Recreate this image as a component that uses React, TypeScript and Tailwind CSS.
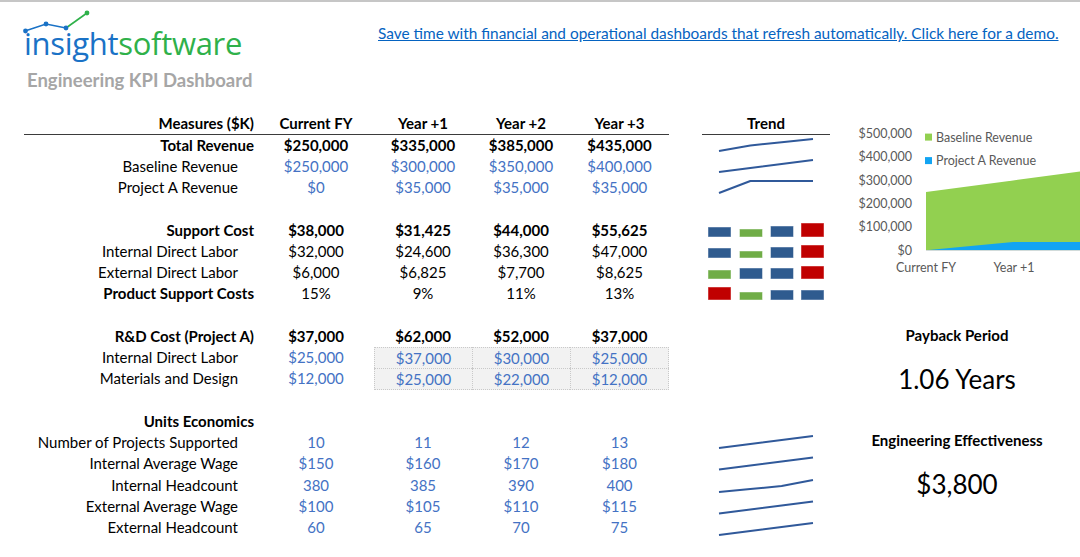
import React from "react";

type Kind = "head" | "bold" | "sub" | "empty";
type Row = {
  kind: Kind;
  label?: string;
  vals?: string[];
  blue?: boolean;
  vb?: boolean;
  shade?: boolean;
  spark?: number[];
  bars?: [string, number][];
};

const B = "#2f5b8f";
const G = "#70ad47";
const R = "#c00000";

const rows: Row[] = [
  { kind: "head", label: "Measures ($K)", vals: ["Current FY", "Year +1", "Year +2", "Year +3"], vb: true },
  { kind: "bold", label: "Total Revenue", vals: ["$250,000", "$335,000", "$385,000", "$435,000"], vb: true, spark: [250, 335, 385, 435] },
  { kind: "sub", label: "Baseline Revenue", vals: ["$250,000", "$300,000", "$350,000", "$400,000"], blue: true, spark: [250, 300, 350, 400] },
  { kind: "sub", label: "Project A Revenue", vals: ["$0", "$35,000", "$35,000", "$35,000"], blue: true, spark: [0, 35, 35, 35] },
  { kind: "empty" },
  { kind: "bold", label: "Support Cost", vals: ["$38,000", "$31,425", "$44,000", "$55,625"], vb: true, bars: [[B, 9], [G, 7], [B, 10], [R, 13]] },
  { kind: "sub", label: "Internal Direct Labor", vals: ["$32,000", "$24,600", "$36,300", "$47,000"], bars: [[B, 9], [G, 6], [B, 10], [R, 12]] },
  { kind: "sub", label: "External Direct Labor", vals: ["$6,000", "$6,825", "$7,700", "$8,625"], bars: [[G, 8], [B, 10], [B, 10], [R, 12]] },
  { kind: "bold", label: "Product Support Costs", vals: ["15%", "9%", "11%", "13%"], bars: [[R, 12], [G, 7], [B, 9], [B, 9]] },
  { kind: "empty" },
  { kind: "bold", label: "R&D Cost (Project A)", vals: ["$37,000", "$62,000", "$52,000", "$37,000"], vb: true },
  { kind: "sub", label: "Internal Direct Labor", vals: ["$25,000", "$37,000", "$30,000", "$25,000"], blue: true, shade: true },
  { kind: "sub", label: "Materials and Design", vals: ["$12,000", "$25,000", "$22,000", "$12,000"], blue: true, shade: true },
  { kind: "empty" },
  { kind: "bold", label: "Units Economics" },
  { kind: "sub", label: "Number of Projects Supported", vals: ["10", "11", "12", "13"], blue: true, spark: [10, 11, 12, 13] },
  { kind: "sub", label: "Internal Average Wage", vals: ["$150", "$160", "$170", "$180"], blue: true, spark: [150, 160, 170, 180] },
  { kind: "sub", label: "Internal Headcount", vals: ["380", "385", "390", "400"], blue: true, spark: [380, 385, 390, 400] },
  { kind: "sub", label: "External Average Wage", vals: ["$100", "$105", "$110", "$115"], blue: true, spark: [100, 105, 110, 115] },
  { kind: "sub", label: "External Headcount", vals: ["60", "65", "70", "75"], blue: true, spark: [60, 65, 70, 75] },
];

function Spark({ data, dy }: { data: number[]; dy: number }) {
  const min = Math.min(...data);
  const max = Math.max(...data);
  const pts = data
    .map((v, i) => `${17 + i * 31.33},${16 + dy - (12 * (v - min)) / (max - min)}`)
    .join(" ");
  return (
    <svg width="128" height="21" viewBox="0 0 128 21" className="block overflow-visible">
      <polyline points={pts} fill="none" stroke="#30599a" strokeWidth="2" strokeLinejoin="round" />
    </svg>
  );
}

function Bars({ bars }: { bars: [string, number][] }) {
  const cx = [17.5, 49, 80, 110.5];
  return (
    <svg width="128" height="21" viewBox="0 0 128 21" className="block">
      {bars.map(([c, h], i) => (
        <rect key={i} x={cx[i] - 11} y={16.5 - h} width={22} height={h} fill={c} stroke={c} strokeOpacity={0.55} strokeWidth={1} />
      ))}
    </svg>
  );
}

function TableRow({ r, idx }: { r: Row; idx: number }) {
  const isHead = r.kind === "head";
  const labelCls =
    r.kind === "sub" ? "pr-[20px] font-normal" : "pr-[4px] font-bold";
  const valColor = r.blue ? "text-[#4472c4]" : "text-black";
  const valWeight = r.vb ? "font-bold" : "font-normal";
  const widths = ["w-[116px]", "w-[98px]", "w-[98px]", "w-[99px]"];
  const dy = idx >= 15 ? (idx - 15) * 0.5 : 0;
  return (
    <div className="flex h-[21.26px] items-stretch">
      <div className={`flex ${isHead ? "border-b border-[#3b3b3b]" : ""}`}>
        <div className={`w-[234px] text-right leading-[20px] whitespace-nowrap ${labelCls}`}>{r.label ?? ""}</div>
        {widths.map((w, i) => {
          const shade = r.shade && i > 0;
          const shadeCls = shade
            ? `bg-[#f2f2f2] border-l border-t border-dotted border-[#c9c9c9] ${i === 3 ? "border-r" : ""} ${idx === 12 ? "border-b" : ""}`
            : "";
          return (
            <div key={i} className={`${w} text-center leading-[20px] whitespace-nowrap ${valColor} ${valWeight} ${shadeCls}`}>
              {r.vals ? r.vals[i] : ""}
            </div>
          );
        })}
      </div>
      <div className="w-[33px]" />
      <div className={`w-[128px] ${isHead ? "border-b border-[#3b3b3b] text-center font-bold leading-[20px]" : ""}`}>
        {isHead ? "Trend" : r.spark ? <Spark data={r.spark} dy={dy} /> : r.bars ? <Bars bars={r.bars} /> : null}
      </div>
    </div>
  );
}

function Chart() {
  const ys = [134, 157.3, 180.6, 204, 227.3, 250.7];
  const labels = ["$500,000", "$400,000", "$300,000", "$200,000", "$100,000", "$0"];
  const f = "Lato, sans-serif";
  return (
    <svg width="250" height="170" viewBox="830 113.4 250 170" className="block">
      {labels.map((l, i) => (
        <text key={l} x={912} y={ys[i] + 4.5} textAnchor="end" fontSize="12.5" fill="#595959" fontFamily={f}>
          {l}
        </text>
      ))}
      <polygon points="926,250.7 926,192.5 1013,180.8 1100,169.2 1100,250.7" fill="#92d050" />
      <polygon points="926,250.7 1013,242.5 1100,242.5 1100,250.7" fill="#12a4f2" />
      <line x1="926" y1="250.9" x2="1080" y2="250.9" stroke="#d9d9d9" strokeWidth="0.8" />
      <rect x="925" y="134" width="7" height="7" fill="#92d050" />
      <text x="936" y="142" fontSize="12.5" fill="#595959" fontFamily={f}>Baseline Revenue</text>
      <rect x="925" y="157.5" width="7" height="7" fill="#12a4f2" />
      <text x="936" y="165.5" fontSize="12.5" fill="#595959" fontFamily={f}>Project A Revenue</text>
      <text x="926" y="272" textAnchor="middle" fontSize="12.5" fill="#595959" fontFamily={f}>Current FY</text>
      <text x="1014" y="272" textAnchor="middle" fontSize="12.5" fill="#595959" fontFamily={f}>Year +1</text>
    </svg>
  );
}

export default function App() {
  return (
    <div className="w-[1080px] h-[557px] overflow-hidden bg-white text-black font-['Lato',sans-serif] text-[15px]">
      <div className="h-[2px] bg-[#c6c6c6]" />
      <div className="flex h-[111.4px]">
        <div className="w-[354px] pl-[24px] pt-[25px]">
          <div className="relative">
            <svg width="70" height="24" viewBox="0 0 70 24" className="absolute left-0 top-[-12px] overflow-visible">
              <polyline points="1,16 22,9 42,13" fill="none" stroke="#1a72c6" strokeWidth="1.6" />
              <line x1="42" y1="13" x2="63" y2="-2" stroke="#2fb14a" strokeWidth="1.6" />
              <circle cx="1.5" cy="16" r="2.4" fill="#1a72c6" />
              <circle cx="22" cy="9" r="2.4" fill="#1a72c6" />
              <circle cx="42" cy="13" r="2.4" fill="#1a72c6" />
              <circle cx="63" cy="-2" r="2.4" fill="#2fb14a" />
            </svg>
            <div className="font-['Open_Sans',sans-serif] text-[31px] leading-[32px] tracking-[-0.3px] whitespace-nowrap">
              <span className="text-[#1a72c6]">insight</span>
              <span className="text-[#2fb14a]">software</span>
            </div>
          </div>
          <div className="mt-[10px] pl-[3px] text-[18.5px] font-bold text-[#a6a6a6] leading-[22px]">Engineering KPI Dashboard</div>
        </div>
        <div className="pl-[24px] pt-[20px]">
          <a className="text-[15.4px] text-[#0563c1] underline whitespace-nowrap">
            Save time with financial and operational dashboards that refresh automatically. Click here for a demo.
          </a>
        </div>
      </div>
      <div className="flex">
        <div className="pl-[24px]">
          {rows.map((r, i) => (
            <TableRow key={i} r={r} idx={i} />
          ))}
        </div>
        <div className="w-[250px] flex flex-col">
          <Chart />
          <div className="mt-[42px] pl-[4px] h-[21px] leading-[21px] text-center font-bold">Payback Period</div>
          <div className="mt-[17px] pl-[4px] h-[32px] leading-[32px] text-center text-[26px]">1.06 Years</div>
          <div className="mt-[35px] pl-[4px] h-[21px] leading-[21px] text-center font-bold">Engineering Effectiveness</div>
          <div className="mt-[17px] pl-[4px] h-[32px] leading-[32px] text-center text-[26px]">$3,800</div>
        </div>
      </div>
    </div>
  );
}
